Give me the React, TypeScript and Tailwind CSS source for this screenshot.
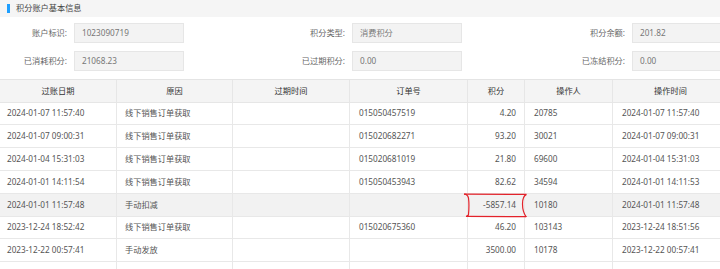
import React from 'react';

const FONT = { fontFamily: '"Noto Sans", "Noto Sans CJK SC", sans-serif' };

// column widths of the ledger table
const COLS = 'grid grid-cols-[116px_116px_117px_118px_57px_88px_116px]';

interface Row {
  date: string;
  reason: string;
  expire: string;
  order: string;
  points: string;
  operator: string;
  opTime: string;
}

const ROWS: Row[] = [
  { date: '2024-01-07 11:57:40', reason: '线下销售订单获取', expire: '', order: '015050457519', points: '4.20', operator: '20785', opTime: '2024-01-07 11:57:40' },
  { date: '2024-01-07 09:00:31', reason: '线下销售订单获取', expire: '', order: '015020682271', points: '93.20', operator: '30021', opTime: '2024-01-07 09:00:31' },
  { date: '2024-01-04 15:31:03', reason: '线下销售订单获取', expire: '', order: '015020681019', points: '21.80', operator: '69600', opTime: '2024-01-04 15:31:03' },
  { date: '2024-01-01 14:11:54', reason: '线下销售订单获取', expire: '', order: '015050453943', points: '82.62', operator: '34594', opTime: '2024-01-01 14:11:53' },
  { date: '2024-01-01 11:57:48', reason: '手动扣减', expire: '', order: '', points: '-5857.14', operator: '10180', opTime: '2024-01-01 11:57:48' },
  { date: '2023-12-24 18:52:42', reason: '线下销售订单获取', expire: '', order: '015020675360', points: '46.20', operator: '103143', opTime: '2023-12-24 18:51:56' },
  { date: '2023-12-22 00:57:41', reason: '手动发放', expire: '', order: '', points: '3500.00', operator: '10178', opTime: '2023-12-22 00:57:41' },
];

const HEADERS = ['过账日期', '原因', '过期时间', '订单号', '积分', '操作人', '操作时间'];

const Field: React.FC<{ label: string; value: string }> = ({ label, value }) => (
  <div className="flex items-center">
    <div className="w-[67px] shrink-0 text-right text-[#666]">{label}</div>
    <div className="ml-[7px] flex h-[20px] w-[110px] shrink-0 items-center border border-[#e6e6e6] bg-[#f3f3f3] pl-[7px] text-[#777]">
      {value}
    </div>
  </div>
);

// hand-drawn red box around the highlighted amount
const Annotation = () => (
  <svg className="pointer-events-none absolute left-[-5px] top-[-1px]" width="65" height="25" viewBox="0 0 65 25" fill="none">
    <path
      d="M1.5 1.2 C4 1.4 5 3 5.5 5 C6 9 6 16 5.5 21.5 C5 23 4 23.5 3 23.4 L63 23.6"
      stroke="#e3232b"
      strokeWidth="1.2"
      strokeLinecap="round"
    />
    <path
      d="M1.5 1.2 L63.5 1.4 C61 2.5 59.5 6 59.5 11 C59.5 16 60.5 20 63 23.6"
      stroke="#e3232b"
      strokeWidth="1.2"
      strokeLinecap="round"
    />
  </svg>
);

export default function App() {
  return (
    <div className="h-[269px] w-[720px] overflow-hidden bg-white text-[8.2px] leading-none" style={FONT}>
      {/* section title */}
      <div className="flex h-[17px] items-center bg-[#f5f5f5]">
        <div className="ml-[7px] h-[9px] w-[3px] bg-[#1e9fff]" />
        <div className="ml-[6px] text-[#444]">积分账户基本信息</div>
      </div>

      {/* account info */}
      <div className="grid grid-cols-[278px_280px_162px] gap-y-[8px] pt-[6px]">
        <Field label="账户标识:" value="1023090719" />
        <Field label="积分类型:" value="消费积分" />
        <Field label="积分余额:" value="201.82" />
        <Field label="已消耗积分:" value="21068.23" />
        <Field label="已过期积分:" value="0.00" />
        <Field label="已冻结积分:" value="0.00" />
      </div>

      {/* ledger table */}
      <div className="mt-[8px] w-[728px] border-t border-[#e4e4e4]">
        <div className={`${COLS} h-[22.6px] border-b border-[#e6e6e6] bg-[#f4f4f4] text-[#333]`}>
          {HEADERS.map((h, i) => (
            <div key={h} className={`flex items-center justify-center ${i > 0 ? 'border-l border-[#e6e6e6]' : ''}`}>
              {h}
            </div>
          ))}
        </div>
        {ROWS.map((r, idx) => (
          <div
            key={r.date}
            className={`${COLS} h-[22.8px] border-b border-[#e8e8e8] text-[#555] ${idx === 4 ? 'bg-[#f2f2f2]' : ''}`}
          >
            <div className="flex items-center pl-[7px]">{r.date}</div>
            <div className="flex items-center border-l border-[#e8e8e8] pl-[8px]">{r.reason}</div>
            <div className="flex items-center border-l border-[#e8e8e8] pl-[8px]">{r.expire}</div>
            <div className="flex items-center border-l border-[#e8e8e8] pl-[9px]">{r.order}</div>
            <div className="relative flex items-center justify-end border-l border-[#e8e8e8] pr-[8px]">
              {r.points}
              {idx === 4 && <Annotation />}
            </div>
            <div className="flex items-center border-l border-[#e8e8e8] pl-[9px]">{r.operator}</div>
            <div className="flex items-center border-l border-[#e8e8e8] pl-[9px]">{r.opTime}</div>
          </div>
        ))}
        <div className={`${COLS} h-[22px]`}>
          {HEADERS.map((h, i) => (
            <div key={h} className={i > 0 ? 'border-l border-[#e8e8e8]' : ''} />
          ))}
        </div>
      </div>
    </div>
  );
}
